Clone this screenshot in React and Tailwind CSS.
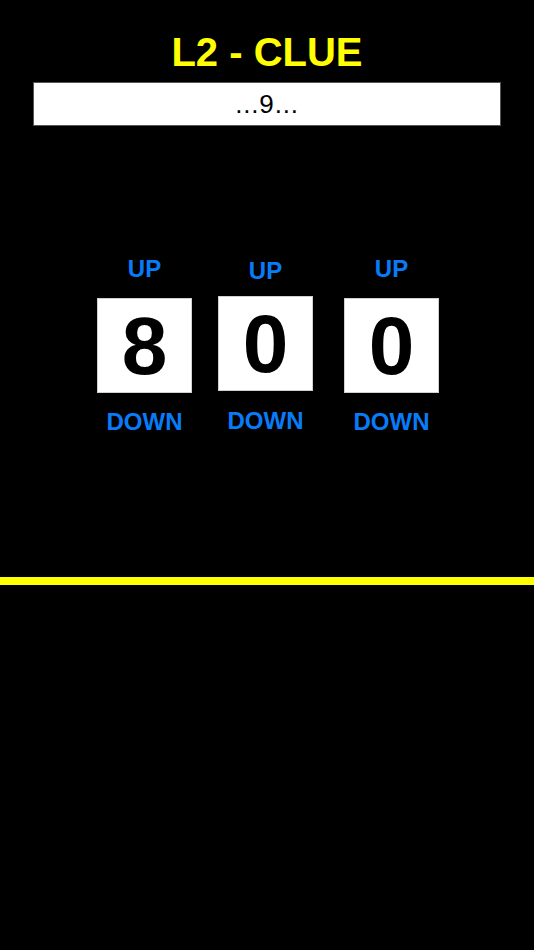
import React from "react";

const font = { fontFamily: '"Liberation Sans", Arial, Helvetica, sans-serif' };

function Col({ digit, col = "", up = "", box = "", down = "" }) {
  return (
    <div className={`flex w-[95px] flex-col items-center ${col}`}>
      <div className={`text-[24px] font-bold leading-none text-[#087cf8] ${up}`}>UP</div>
      <div
        className={`flex h-[95px] w-[95px] items-center justify-center border border-[#d0d0d0] bg-white text-[82px] font-bold leading-none text-black ${box}`}
      >
        {digit}
      </div>
      <div className={`text-[24px] font-bold leading-none text-[#087cf8] ${down}`}>DOWN</div>
    </div>
  );
}

export default function App() {
  return (
    <div className="min-h-[950px] w-full bg-black" style={font}>
      <div className="pt-[32px] text-center text-[40px] font-bold leading-none text-[#ffff00]">
        L2 - CLUE
      </div>
      <div className="mx-[33px] mt-[10px] flex h-[44px] items-center justify-center border border-[#555] bg-white text-[26px] leading-none tracking-[0.8px] text-black">
        ...9...
      </div>
      <div className="mt-[131px] flex pl-[97px]">
        <Col digit="8" box="mt-[17px]" down="mt-[17px]" />
        <Col digit="0" col="ml-[26px]" up="mt-[2px]" box="mt-[13px]" down="mt-[18px]" />
        <Col digit="0" col="ml-[31px]" box="mt-[17px]" down="mt-[17px]" />
      </div>
      <div className="mt-[143px] h-[8px] w-full bg-[#ffff00]" />
    </div>
  );
}
